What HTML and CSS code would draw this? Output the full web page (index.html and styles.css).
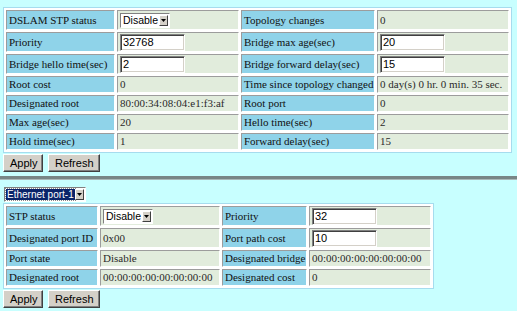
FILE: index.html
```html
<!DOCTYPE html>
<html lang="en">

<head>
    <meta charset="UTF-8">
    <title>STP</title>
    <link rel="stylesheet" href="styles.css">
</head>

<body>

    <form name="bridge" class="block">
        <table class="grid bridge-grid">
            <colgroup>
                <col class="b1"><col class="b2"><col class="b3"><col class="b4">
            </colgroup>
            <tr class="tall">
                <td class="lbl">DSLAM STP status</td>
                <td class="val">
                    <span class="dd"><span class="dd-text">Disable</span><span class="dd-btn"><svg width="5" height="3" viewBox="0 0 5 3"><path d="M0 0h5L2.5 3z" fill="#000"/></svg></span></span>
                </td>
                <td class="lbl">Topology changes</td>
                <td class="val">0</td>
            </tr>
            <tr class="tall">
                <td class="lbl">Priority</td>
                <td class="val"><input class="input" value="32768"></td>
                <td class="lbl">Bridge max age(sec)</td>
                <td class="val"><input class="input" value="20"></td>
            </tr>
            <tr class="tall">
                <td class="lbl">Bridge hello time(sec)</td>
                <td class="val"><input class="input" value="2"></td>
                <td class="lbl">Bridge forward delay(sec)</td>
                <td class="val"><input class="input" value="15"></td>
            </tr>
            <tr>
                <td class="lbl">Root cost</td>
                <td class="val">0</td>
                <td class="lbl">Time since topology changed</td>
                <td class="val">0 day(s) 0 hr. 0 min. 35 sec.</td>
            </tr>
            <tr>
                <td class="lbl">Designated root</td>
                <td class="val">80:00:34:08:04:e1:f3:af</td>
                <td class="lbl">Root port</td>
                <td class="val">0</td>
            </tr>
            <tr>
                <td class="lbl">Max age(sec)</td>
                <td class="val">20</td>
                <td class="lbl">Hello time(sec)</td>
                <td class="val">2</td>
            </tr>
            <tr>
                <td class="lbl">Hold time(sec)</td>
                <td class="val">1</td>
                <td class="lbl">Forward delay(sec)</td>
                <td class="val">15</td>
            </tr>
        </table>
        <div class="actions">
            <button type="button" class="btn">Apply</button>
            <button type="button" class="btn">Refresh</button>
        </div>
    </form>

    <div class="rule"></div>

    <form name="port" class="block">
        <span class="dd port-pick"><span class="dd-text"><span class="hl">Ethernet port-1</span></span><span class="dd-btn"><svg width="5" height="3" viewBox="0 0 5 3"><path d="M0 0h5L2.5 3z" fill="#000"/></svg></span></span>
        <table class="grid port-grid">
            <colgroup>
                <col class="p1"><col class="p2"><col class="p3"><col class="p4">
            </colgroup>
            <tr class="tall">
                <td class="lbl">STP status</td>
                <td class="val">
                    <span class="dd"><span class="dd-text">Disable</span><span class="dd-btn"><svg width="5" height="3" viewBox="0 0 5 3"><path d="M0 0h5L2.5 3z" fill="#000"/></svg></span></span>
                </td>
                <td class="lbl">Priority</td>
                <td class="val"><input class="input" value="32"></td>
            </tr>
            <tr class="tall">
                <td class="lbl">Designated port ID</td>
                <td class="val">0x00</td>
                <td class="lbl">Port path cost</td>
                <td class="val"><input class="input" value="10"></td>
            </tr>
            <tr>
                <td class="lbl">Port state</td>
                <td class="val">Disable</td>
                <td class="lbl">Designated bridge</td>
                <td class="val">00:00:00:00:00:00:00:00</td>
            </tr>
            <tr>
                <td class="lbl">Designated root</td>
                <td class="val">00:00:00:00:00:00:00:00</td>
                <td class="lbl">Designated cost</td>
                <td class="val">0</td>
            </tr>
        </table>
        <div class="actions">
            <button type="button" class="btn">Apply</button>
            <button type="button" class="btn">Refresh</button>
        </div>
    </form>

</body>

</html>
```

FILE: styles.css
```css
*,
::before,
::after {
    margin: 0;
    box-sizing: border-box;
}

body {
    padding: 7px 0 0 3px;
    background: #c8ffff;
    color: #000;
    font: 11px/15px "Liberation Serif", "Times New Roman", serif;
}

/* tables */
.grid {
    border-collapse: separate;
    border-spacing: 2px;
    table-layout: fixed;
    background: #fff;
    border: 1px solid #a6dcee;
}

.bridge-grid {
    width: 509px;
}

.port-grid {
    width: 431px;
}

.b1 { width: 109px; }
.b2 { width: 122px; }
.b3 { width: 134px; }
.b4 { width: 132px; }

.p1 { width: 92px; }
.p2 { width: 120px; }
.p3 { width: 85px; }
.p4 { width: 122px; }

.grid td {
    height: 17px;
    padding: 0 1px 0 2px;
    border: 1px solid;
    border-color: #9c9c9c #fff #fff #9c9c9c;
    white-space: nowrap;
    vertical-align: middle;
}

.grid .tall td {
    height: 20px;
}

.lbl {
    background: #8fd3e9;
    color: #111;
}

.val {
    background: #e1ecdc;
    color: #2a2a2a;
}

/* controls */
.input {
    display: block;
    width: 65px;
    height: 17px;
    padding: 0 2px;
    font: 11px "Liberation Sans", Arial, sans-serif;
    color: #000;
    background: #fff;
    border: 1px solid;
    border-color: #808080 #fff #fff #808080;
    box-shadow: inset 1px 1px #404040, inset -1px -1px #d4d0c8;
}

.dd {
    display: flex;
    align-items: stretch;
    width: 50px;
    height: 15px;
    padding: 1px;
    background: #fff;
    border: 1px solid;
    border-color: #808080 #fff #fff #808080;
    font: 10.5px/11px "Liberation Sans", Arial, sans-serif;
    color: #000;
}

.dd-text {
    flex: 1;
    min-width: 0;
    padding-left: 1px;
    white-space: nowrap;
}

.dd-btn {
    display: flex;
    flex: none;
    align-items: center;
    justify-content: center;
    width: 9px;
    background: #d4d0c8;
    border: 1px solid;
    border-color: #fff #404040 #404040 #fff;
}

.port-pick {
    width: 82px;
    height: 15px;
    margin: 7px 0 1px 1px;
    font-size: 10px;
}

.port-pick .dd-text {
    padding-left: 0;
}

.hl {
    display: block;
    height: 11px;
    padding: 0 1px;
    line-height: 11px;
    background: #0a246a;
    color: #fff;
    outline: 1px dotted #8a8a8a;
}

.actions {
    display: flex;
    gap: 5px;
    margin-top: 1px;
}

.btn {
    height: 18px;
    padding: 0 6px;
    font: 11px "Liberation Sans", Arial, sans-serif;
    color: #000;
    background: #d4d0c8;
    border: 1px solid;
    border-color: #fff #404040 #404040 #fff;
    box-shadow: inset -1px -1px #808080;
}

.actions .btn:first-child {
    width: 40px;
}

.actions .btn:last-child {
    width: 52px;
}

.rule {
    height: 4px;
    margin: 4px 0 0 -3px;
    border-top: 3px solid #788686;
    border-bottom: 1px solid #a8b8b8;
}
```
